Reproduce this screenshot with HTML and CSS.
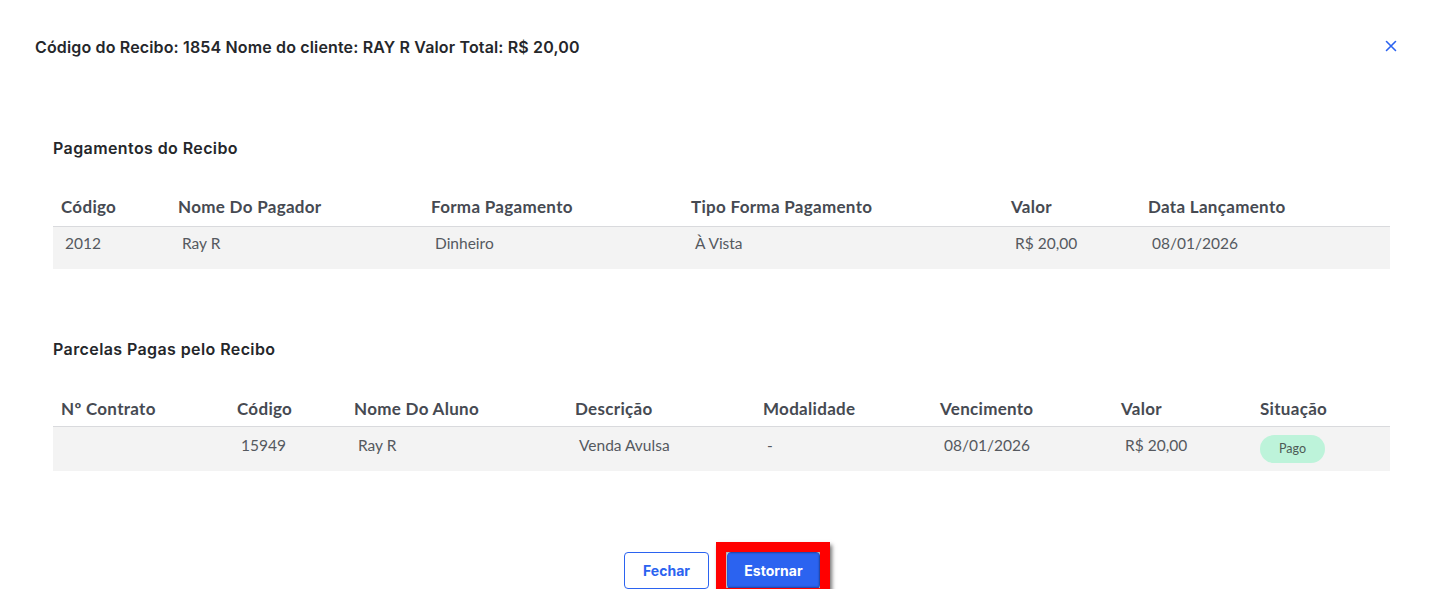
FILE: index.html
```html
<!DOCTYPE html>
<html lang="pt-BR">
<head>
<meta charset="utf-8">
<title>Recibo</title>
<link rel="stylesheet" href="styles.css">
</head>
<body>
<div class="modal">
  <header class="modal-header">
    <h1 class="modal-title">Código do Recibo: 1854 Nome do cliente: RAY R Valor Total: R$ 20,00</h1>
    <button class="close-btn" aria-label="Fechar">
      <svg width="12" height="12" viewBox="0 0 12 12"><path d="M1.5 1.5 L10.5 10.5 M10.5 1.5 L1.5 10.5" stroke="#2b63f0" stroke-width="1.6" stroke-linecap="round"/></svg>
    </button>
  </header>

  <section class="section section-first">
    <h2 class="section-title">Pagamentos do Recibo</h2>
    <table class="grid grid-pag">
      <colgroup>
        <col style="width:117px"><col style="width:253px"><col style="width:260px"><col style="width:320px"><col style="width:137px"><col style="width:250px">
      </colgroup>
      <thead>
        <tr><th>Código</th><th>Nome Do Pagador</th><th>Forma Pagamento</th><th>Tipo Forma Pagamento</th><th>Valor</th><th>Data Lançamento</th></tr>
      </thead>
      <tbody>
        <tr><td>2012</td><td>Ray R</td><td>Dinheiro</td><td>À Vista</td><td>R$ 20,00</td><td>08/01/2026</td></tr>
      </tbody>
    </table>
  </section>

  <section class="section section-second">
    <h2 class="section-title">Parcelas Pagas pelo Recibo</h2>
    <table class="grid grid-parc">
      <colgroup>
        <col style="width:176px"><col style="width:117px"><col style="width:221px"><col style="width:188px"><col style="width:177px"><col style="width:181px"><col style="width:139px"><col style="width:138px">
      </colgroup>
      <thead>
        <tr><th>Nº Contrato</th><th>Código</th><th>Nome Do Aluno</th><th>Descrição</th><th>Modalidade</th><th>Vencimento</th><th>Valor</th><th>Situação</th></tr>
      </thead>
      <tbody>
        <tr><td></td><td>15949</td><td>Ray R</td><td>Venda Avulsa</td><td>-</td><td>08/01/2026</td><td>R$ 20,00</td><td class="badge-cell"><span class="badge">Pago</span></td></tr>
      </tbody>
    </table>
  </section>

  <footer class="actions">
    <button class="btn btn-outline">Fechar</button>
    <button class="btn btn-primary highlighted">Estornar</button>
  </footer>
</div>
</body>
</html>
```

FILE: styles.css
```css
* { box-sizing: border-box; }
html, body { margin: 0; padding: 0; background: #fff; }
body { font-family: "Lato", "Open Sans", sans-serif; color: #2c2f33; }

.modal { width: 1443px; }

.modal-header {
  display: flex;
  justify-content: space-between;
  align-items: center;
  padding: 36px 44px 0 35px;
}
.modal-title {
  margin: 0;
  font-family: "Inter", "Noto Sans", sans-serif;
  font-weight: 600;
  font-size: 16px;
  letter-spacing: 0.15px;
  line-height: 22px;
  color: #25272b;
}
.close-btn {
  border: 0;
  background: transparent;
  padding: 0;
  width: 16px;
  height: 16px;
  display: flex;
  align-items: center;
  justify-content: center;
  margin-top: -2px;
}

.section { padding: 0 53px; }
.section-first { margin-top: 80px; }
.section-second { margin-top: 70px; }

.section-title {
  margin: 0 0 32px;
  font-family: "Inter", "Noto Sans", sans-serif;
  font-weight: 600;
  font-size: 16px;
  letter-spacing: 0.4px;
  line-height: 20px;
  color: #25272b;
}

.grid {
  border-collapse: collapse;
  table-layout: fixed;
  width: 1337px;
}
.grid th {
  text-align: left;
  font-family: "Lato", sans-serif;
  font-weight: 700;
  font-size: 17px;
  letter-spacing: 0.3px;
  color: #464a52;
  padding: 0 0 3px 8px;
  height: 36px;
  vertical-align: middle;
  border-bottom: 1px solid #d9dadd;
  white-space: nowrap;
}
.grid td {
  font-family: "Lato", sans-serif;
  font-size: 15.5px;
  line-height: 20px;
  color: #55595f;
  padding: 6px 0 0 12px;
  height: 43px;
  background: #f3f3f3;
  vertical-align: top;
  white-space: nowrap;
}
.grid-parc th { height: 35px; padding-bottom: 0; }
.grid-parc td { height: 45px; padding-top: 8px; }
.grid-parc td.badge-cell { padding-left: 8px; }

.badge {
  display: inline-block;
  background: #bdf3da;
  color: #4d5a55;
  font-size: 12.5px;
  line-height: 28px;
  height: 28px;
  width: 65px;
  text-align: center;
  border-radius: 14px;
}

.actions {
  display: flex;
  justify-content: center;
  gap: 18px;
  margin-top: 81px;
  padding-left: 1px;
}
.btn {
  font-family: "Inter", "Noto Sans", sans-serif;
  font-weight: 700;
  font-size: 14px;
  height: 37px;
  border-radius: 4px;
  cursor: pointer;
}
.btn-outline {
  width: 85px;
  background: #fff;
  border: 1px solid #2b63f0;
  color: #2b63f0;
}
.btn-primary {
  width: 93px;
  background: #2b63f0;
  border: 1px solid #2b63f0;
  color: #fff;
}
.highlighted { position: relative; }
.highlighted::after {
  content: "";
  position: absolute;
  left: -12px;
  top: -11px;
  right: -11px;
  bottom: -10px;
  border: 10px solid #ff0000;
  box-shadow: 2px 3px 4px rgba(0,0,0,0.55), inset 0 0 2px 1px rgba(0,0,0,0.35);
  pointer-events: none;
}
```
